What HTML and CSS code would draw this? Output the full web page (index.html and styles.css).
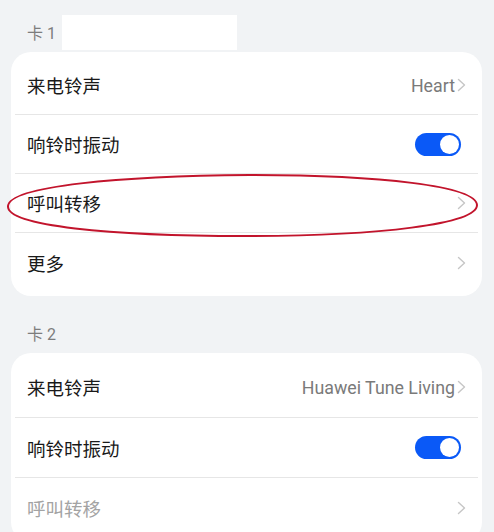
FILE: index.html
```html
<!DOCTYPE html>
<html lang="zh">
<head>
<meta charset="utf-8">
<link rel="stylesheet" href="styles.css">
</head>
<body>
<div class="page">
  <div class="section-head"><span>卡 1</span><span class="redact"></span></div>
  <div class="card">
    <div class="row">
      <span class="title">来电铃声</span>
      <span class="value">Heart<svg class="chev" viewBox="0 0 9 14" width="9" height="14"><polyline points="1.5,1.5 7.5,7 1.5,12.5"/></svg></span>
    </div>
    <div class="row">
      <span class="title">响铃时振动</span>
      <span class="toggle"><span class="knob"></span></span>
    </div>
    <div class="row">
      <span class="title">呼叫转移</span>
      <svg class="chev" viewBox="0 0 9 14" width="9" height="14"><polyline points="1.5,1.5 7.5,7 1.5,12.5"/></svg>
    </div>
    <div class="row">
      <span class="title">更多</span>
      <svg class="chev" viewBox="0 0 9 14" width="9" height="14"><polyline points="1.5,1.5 7.5,7 1.5,12.5"/></svg>
    </div>
  </div>

  <div class="section-head gap"><span>卡 2</span></div>
  <div class="card tall">
    <div class="row">
      <span class="title">来电铃声</span>
      <span class="value">Huawei Tune Living<svg class="chev" viewBox="0 0 9 14" width="9" height="14"><polyline points="1.5,1.5 7.5,7 1.5,12.5"/></svg></span>
    </div>
    <div class="row">
      <span class="title">响铃时振动</span>
      <span class="toggle"><span class="knob"></span></span>
    </div>
    <div class="row">
      <span class="title disabled">呼叫转移</span>
      <svg class="chev" viewBox="0 0 9 14" width="9" height="14"><polyline points="1.5,1.5 7.5,7 1.5,12.5"/></svg>
    </div>
  </div>

  <svg class="mark" viewBox="0 0 494 532" width="494" height="532">
    <path d="M 8 206 C 10 186, 120 176, 250 175 C 380 175, 476 186, 477 205 C 477 224, 380 236, 245 236 C 110 236, 6 226, 8 206 Z"/>
  </svg>
</div>
</body>
</html>
```

FILE: styles.css
```css
* { box-sizing: border-box; }

html, body {
  margin: 0;
  padding: 0;
  background: #f1f3f5;
}

body {
  font-family: Roboto, "Noto Sans CJK SC", sans-serif;
  color: #191919;
}

.page {
  position: relative;
  width: 494px;
  height: 532px;
  overflow: hidden;
  padding-top: 12px;
}

.section-head {
  height: 40px;
  display: flex;
  align-items: center;
  padding-left: 27px;
  font-size: 16px;
  color: #7d7d7d;
}

.section-head.gap {
  margin-top: 17px;
}

.redact {
  width: 175px;
  height: 35px;
  background: #ffffff;
  margin-left: 6px;
}

.card {
  margin: 0 12px 0 11px;
  background: #ffffff;
  border-radius: 20px;
  padding: 4px;
}

.row {
  height: 59px;
  display: flex;
  align-items: center;
  justify-content: space-between;
  padding: 0 12px;
  border-bottom: 1px solid #e6e6e6;
}

.card.tall .row {
  height: 60px;
}

.card.tall .row:first-child {
  height: 61px;
}

.row:last-child {
  border-bottom: none;
}

.title {
  font-size: 18.5px;
  color: #191919;
}

.title.disabled {
  color: #a3a3a3;
}

.value {
  display: flex;
  align-items: center;
  font-size: 17.8px;
  color: #7a7a7a;
}

.value .chev {
  margin-left: 2px;
}

.chev {
  display: block;
  flex: none;
}

.chev polyline {
  fill: none;
  stroke: #c6c6c6;
  stroke-width: 1.4;
  stroke-linecap: round;
  stroke-linejoin: round;
}

.toggle {
  width: 46px;
  height: 23px;
  border-radius: 12px;
  background: #0a59f7;
  margin-right: 5px;
  display: flex;
  align-items: center;
  justify-content: flex-end;
  padding-right: 2px;
}

.knob {
  width: 19px;
  height: 19px;
  border-radius: 50%;
  background: #ffffff;
}

.mark {
  position: absolute;
  left: 0;
  top: 0;
  pointer-events: none;
}

.mark path {
  fill: none;
  stroke: #c2142c;
  stroke-width: 2;
}
```
